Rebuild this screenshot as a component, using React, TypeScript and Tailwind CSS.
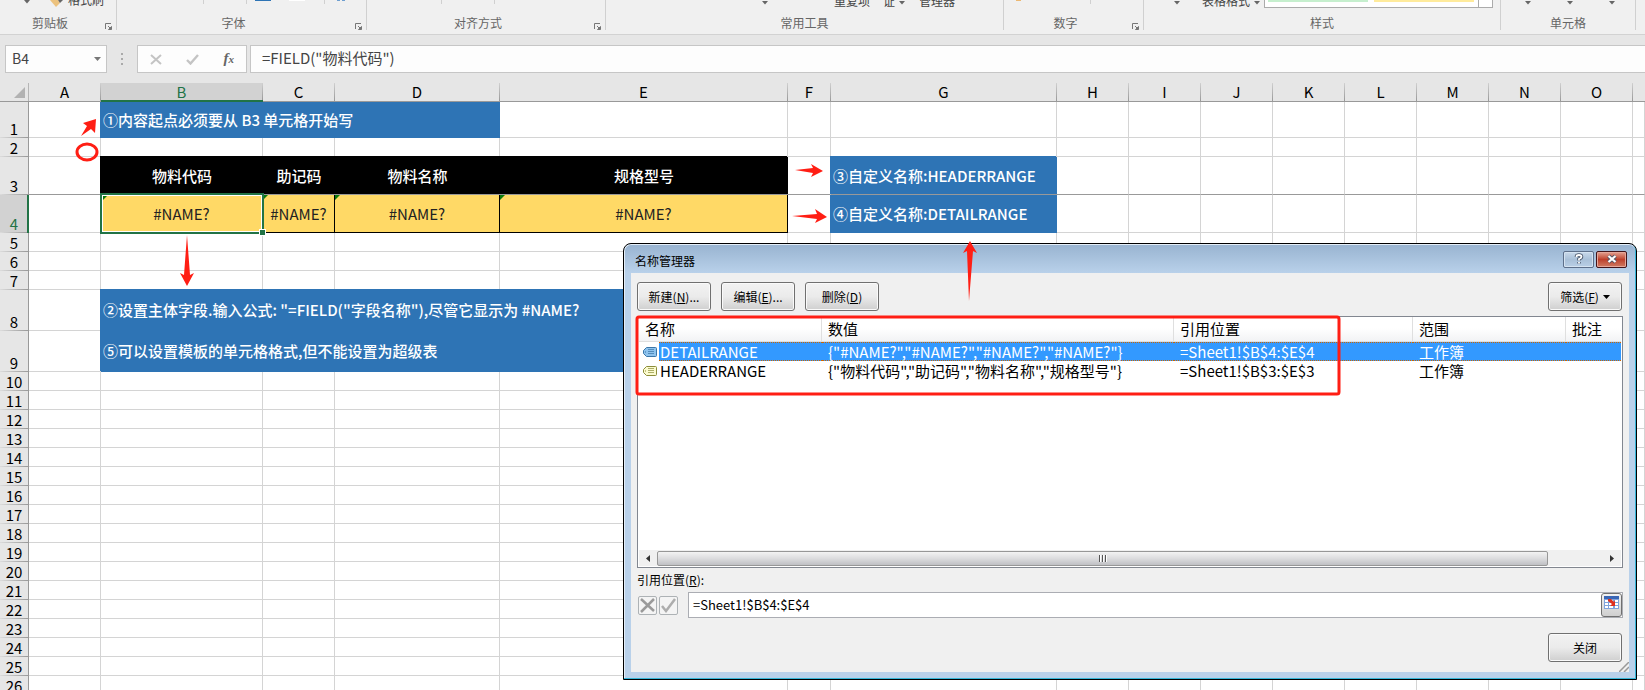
import React from "react";

const FONT = "font-['Noto_Sans_CJK_SC','Noto_Sans',sans-serif]";
const BOLD_FONT = "font-medium";

function Caret({ className = "" }: { className?: string }) {
  return (
    <svg className={`shrink-0 ${className}`} width="6" height="4" viewBox="0 0 6 4" aria-hidden="true">
      <path d="M0 0h6L3 3.5z" fill="#666" />
    </svg>
  );
}

function Launcher({ label }: { label: string }) {
  return (
    <button type="button" aria-label={label} className="h-[7px] w-[7px] shrink-0">
      <svg width="7" height="7" viewBox="0 0 7 7" fill="none" stroke="#777">
        <path d="M.5 6V.5H6" />
        <path d="M3 3l3 3" />
        <path d="M6.500 3.500v3h-3z" fill="#777" />
      </svg>
    </button>
  );
}

function Group({
  label,
  launcher,
  className,
  children,
}: {
  label: string;
  launcher?: boolean;
  className: string;
  children?: React.ReactNode;
}) {
  return (
    <section className={`flex shrink-0 flex-col ${className}`}>
      <div className="flex h-[30px] flex-col border-r border-[#d0d0d0]">
        <div className="flex h-2 items-start">{children}</div>
        <div className="flex h-[22px] items-end">
          <h2 className="flex-1 text-center text-[12px] leading-[14px] text-[#666]">{label}</h2>
          {launcher && (
            <span className="flex w-4 justify-end pr-1">
              <Launcher label={label} />
            </span>
          )}
        </div>
      </div>
    </section>
  );
}

function Tick({ className = "" }: { className?: string }) {
  return <span className={`h-1 w-px shrink-0 bg-[#d0d0d0] ${className}`} />;
}

function CutText({ children, className = "" }: { children: string; className?: string }) {
  return (
    <span className={`flex h-2 shrink-0 items-end whitespace-nowrap text-[12px] leading-[14px] text-[#444] ${className}`}>
      {children}
    </span>
  );
}

function Ribbon() {
  return (
    <header className="flex h-[35px] shrink-0 overflow-hidden border-b border-[#d2d2d2] bg-[#f0f0f0]">
      <Group label="剪贴板" launcher className="w-[117px]">
        <Caret className="ml-6" />
        <svg className="ml-5 shrink-0" width="14" height="7" viewBox="0 0 14 7" aria-hidden="true">
          <path d="M0 0h8l2 3-4 4z" fill="#ecc27e" />
          <path d="M8 0h5l-3 3z" fill="#666" />
        </svg>
        <CutText className="ml-1 -mt-px">格式刷</CutText>
      </Group>
      <Group label="字体" launcher className="w-[250px]">
        <Tick className="ml-[86px]" />
        <Tick className="ml-[42px]" />
        <span className="ml-2 h-px w-4 bg-[#2e74b5]" />
        <span className="ml-[18px] h-px w-4 bg-white" />
        <Tick className="ml-[19px]" />
        <span className="ml-3 h-px w-[3px] bg-[#6f9fd0]" />
        <span className="ml-[2px] h-px w-[3px] bg-[#6f9fd0]" />
      </Group>
      <Group label="对齐方式" launcher className="w-[239px]">
        <Tick className="ml-[74px]" />
        <Tick className="ml-[52px]" />
      </Group>
      <Group label="常用工具" className="w-[398px]">
        <Caret className="ml-[156px] mt-px" />
        <CutText className="ml-[66px]">重复项</CutText>
        <CutText className="ml-[13px]">证</CutText>
        <Caret className="ml-1 mt-px" />
        <CutText className="ml-[14px]">管理器</CutText>
      </Group>
      <Group label="数字" launcher className="w-[140px]">
        <span className="ml-3 h-px w-[5px] bg-[#ecb872]" />
        <Tick className="ml-[69px]" />
      </Group>
      <Group label="样式" className="min-w-[357px] flex-1">
        <Caret className="ml-[30px] mt-px" />
        <CutText className="ml-[22px]">表格格式</CutText>
        <Caret className="ml-1 mt-px" />
        <div className="ml-1 flex h-2 flex-1 border-x border-b border-[#ababab] bg-white pl-[3px]">
          <span className="h-[2px] flex-1 bg-[#c6efce]" />
          <span className="ml-[6px] h-[2px] flex-1 bg-[#ffeb9c]" />
          <span className="ml-1 h-[7px] w-[14px] border-l border-[#ababab]" />
        </div>
        <span className="w-[7px]" />
      </Group>
      <Group label="单元格" className="w-[135px]">
        <Caret className="ml-6 mt-px" />
        <Caret className="ml-9 mt-px" />
        <Caret className="ml-9 mt-px" />
      </Group>
      <span className="w-[9px] shrink-0" />
    </header>
  );
}

function FormulaBar() {
  return (
    <div className="flex h-[48px] shrink-0 items-start pl-[5px] pt-[10px]">
      <div className="flex h-7 w-[102px] shrink-0 items-center border border-[#c6c6c6] bg-[#fdfdfd] pr-[5px]">
        <input
          aria-label="名称框"
          defaultValue="B4"
          className="h-full w-0 flex-1 bg-transparent pb-[2px] pl-[6px] text-[14px] text-[#444] outline-none"
        />
        <svg width="7" height="4" viewBox="0 0 7 4" aria-hidden="true">
          <path d="M0 0h7L3.500 4z" fill="#777" />
        </svg>
      </div>
      <span className="flex h-7 w-[30px] shrink-0 flex-col items-center justify-center gap-[3px]">
        <i className="size-[2px] bg-[#aaa]" />
        <i className="size-[2px] bg-[#aaa]" />
        <i className="size-[2px] bg-[#aaa]" />
      </span>
      <div className="flex h-7 w-[110px] shrink-0 items-center justify-around border border-[#c6c6c6] bg-[#fdfdfd]">
        <button type="button" aria-label="取消">
          <svg width="12" height="11" viewBox="0 0 12 11" stroke="#c4c4c4" strokeWidth="2">
            <path d="M1 1l10 9M11 1L1 10" />
          </svg>
        </button>
        <button type="button" aria-label="输入">
          <svg width="13" height="11" viewBox="0 0 13 11" fill="none" stroke="#c4c4c4" strokeWidth="2.400">
            <path d="M1 6l3.500 3.500L12 1" />
          </svg>
        </button>
        <button type="button" aria-label="插入函数" className="pb-[2px] font-['Liberation_Serif',serif] text-[15px] font-bold italic leading-5 text-[#666]">
          f<span className="text-[11px]">x</span>
        </button>
      </div>
      <input
        aria-label="编辑栏"
        defaultValue={'=FIELD("物料代码")'}
        className="ml-[3px] h-7 w-0 flex-1 border border-r-0 border-[#c6c6c6] bg-[#fdfdfd] pb-1 pl-[11px] text-[15px] text-[#444] outline-none"
      />
    </div>
  );
}

const COLS: [string, string][] = [
  ["A", "w-[72px]"],
  ["B", "w-[162px]"],
  ["C", "w-[72px]"],
  ["D", "w-[165px]"],
  ["E", "w-[288px]"],
  ["F", "w-[43px]"],
  ["G", "w-[226px]"],
  ["H", "w-[72px]"],
  ["I", "w-[72px]"],
  ["J", "w-[72px]"],
  ["K", "w-[72px]"],
  ["L", "w-[72px]"],
  ["M", "w-[72px]"],
  ["N", "w-[72px]"],
  ["O", "w-[72px]"],
  ["", ""],
];

const BLUE = `relative overflow-visible whitespace-nowrap bg-[#2e74b5] pl-[2px] text-left text-[15px] text-white ${BOLD_FONT}`;

function Blank({ n, line = "border-b-[#d4d4d4]" }: { n: number; line?: string }) {
  return (
    <>
      {Array.from({ length: n }, (_, i) => (
        <td key={i} className={`border-b border-r border-r-[#d4d4d4] p-0 ${line}`} />
      ))}
    </>
  );
}

function RowHead({ n, active }: { n: number; active?: boolean }) {
  return (
    <th
      scope="row"
      className={`relative border-r p-0 text-center align-bottom text-[15px] font-normal leading-[18px] ${
        active ? "border-r-[#217346] bg-[#d2d2d2] text-[#217346]" : "border-r-[#999] bg-[#e6e6e6] text-black"
      }`}
    >
      <span className="block h-[17px] leading-[18px]">{n}</span>
      <span className="block h-px bg-linear-to-r from-[#dcdcdc] to-[#999]" />
      {active && <span className="absolute inset-y-0 right-0 w-px bg-[#217346]" />}
    </th>
  );
}

function Flag() {
  return (
    <svg className="absolute left-0 top-0" width="5" height="5" viewBox="0 0 5 5" aria-hidden="true">
      <path d="M0 0h5L0 5z" fill="#0b7a0b" />
    </svg>
  );
}

function Sheet() {
  const fields = ["物料代码", "助记码", "物料名称", "规格型号"];
  return (
    <table className="w-full min-w-[1645px] table-fixed border-separate border-spacing-0 bg-white">
      <colgroup>
        <col className="w-[29px]" />
        {COLS.map(([name, w]) => (
          <col key={name} className={w} />
        ))}
      </colgroup>
      <thead>
        <tr className="h-[19px]">
          <th className="border-b border-[#999] bg-[#e6e6e6] p-0">
            <div className="flex h-[18px] items-center justify-end border-r border-[#b5b5b5] pr-[3px]">
              <svg width="11" height="11" viewBox="0 0 11 11" aria-hidden="true">
                <path d="M11 0v11H0z" fill="#b2b2b2" />
              </svg>
            </div>
          </th>
          {COLS.map(([name]) => (
            <th
              key={name}
              scope="col"
              className={`border-b p-0 text-[15px] font-normal ${
                name === "B" ? "border-b-[#217346] bg-[#d2d2d2] text-[#217346]" : "border-b-[#999] bg-[#e6e6e6] text-black"
              }`}
            >
              <div className={`flex h-[18px] ${name === "B" ? "border-b border-[#217346]" : ""}`}>
                <span className="flex-1 leading-[18px]">{name}</span>
                {name && <span className="w-px bg-linear-to-b from-[#d0d0d0] to-[#999]" />}
              </div>
            </th>
          ))}
        </tr>
      </thead>
      <tbody>
        <tr className="h-9">
          <RowHead n={1} />
          <td className="border-b border-r border-[#d4d4d4]" />
          <td colSpan={3} className={`${BLUE} shadow-[-1px_0_0_#2e74b5]`}>
            ①内容起点必须要从 B3 单元格开始写
          </td>
          <Blank n={12} />
        </tr>
        <tr className="h-[19px]">
          <RowHead n={2} />
          <Blank n={16} />
        </tr>
        <tr className="h-[38px]">
          <RowHead n={3} />
          <Blank n={1} line="border-b-[#999]" />
          {fields.map((f) => (
            <td
              key={f}
              className={`relative border-b border-[#999] bg-black p-0 pt-[2px] text-center text-[15px] text-white shadow-[-1px_-1px_0_#000] ${BOLD_FONT}`}
            >
              {f}
            </td>
          ))}
          <Blank n={1} line="border-b-[#999]" />
          <td className={`${BLUE} border-b border-[#999] pb-0 pt-[2px] shadow-[-1px_-1px_0_#2e74b5]`}>
            ③自定义名称:HEADERRANGE
          </td>
          <Blank n={9} line="border-b-[#999]" />
        </tr>
        <tr className="h-[38px]">
          <RowHead n={4} active />
          <Blank n={1} />
          {fields.map((f, i) => (
            <td
              key={f}
              className={`relative border-b border-r border-black bg-[#ffd966] p-0 pt-px text-center text-[15px] text-[#222] ${
                i === 0 ? "z-10" : ""
              }`}
            >
              {i === 0 && (
                <span className="pointer-events-none absolute -bottom-[2px] -left-px -right-[2px] -top-[2px] border-2 border-[#217346]">
                  <span className="absolute inset-0 border border-white" />
                  <span className="absolute -bottom-1 -right-1 size-[7px] border border-white bg-[#217346]" />
                </span>
              )}
              {i === 0 ? (
                <span className="absolute left-[2px] top-px">
                  <svg width="4" height="4" viewBox="0 0 4 4" aria-hidden="true">
                    <path d="M0 0h4L0 4z" fill="#0b7a0b" />
                  </svg>
                </span>
              ) : (
                <Flag />
              )}
              #NAME?
            </td>
          ))}
          <Blank n={1} />
          <td className={`${BLUE} shadow-[-1px_0_0_#2e74b5]`}>④自定义名称:DETAILRANGE</td>
          <Blank n={9} />
        </tr>
        {[5, 6, 7].map((n) => (
          <tr key={n} className="h-[19px]">
            <RowHead n={n} />
            <Blank n={16} />
          </tr>
        ))}
        <tr className="h-[41px]">
          <RowHead n={8} />
          <Blank n={1} />
          <td colSpan={4} className={`${BLUE} shadow-[-1px_-1px_0_#2e74b5]`}>
            {'②设置主体字段.输入公式: "=FIELD("字段名称"),尽管它显示为 #NAME?'}
          </td>
          <Blank n={11} />
        </tr>
        <tr className="h-[41px]">
          <RowHead n={9} />
          <Blank n={1} />
          <td colSpan={4} className={`${BLUE} shadow-[-1px_-1px_0_#2e74b5]`}>
            ⑤可以设置模板的单元格格式,但不能设置为超级表
          </td>
          <Blank n={11} />
        </tr>
        {Array.from({ length: 17 }, (_, i) => i + 10).map((n) => (
          <tr key={n} className="h-[19px]">
            <RowHead n={n} />
            <Blank n={16} />
          </tr>
        ))}
      </tbody>
    </table>
  );
}

const BTN =
  "flex items-center justify-center rounded-[3px] border border-[#707070] bg-linear-to-b from-[#f2f2f2] from-0% via-[#ebebeb] via-50% to-[#cfcfcf] text-[12px] text-black shadow-[inset_0_0_0_1px_#fafafa]";

function TagIcon({ selected }: { selected?: boolean }) {
  const fill = selected ? "#8ec3ee" : "#fbfbcf";
  const line = selected ? "#3b76a8" : "#8d8d3a";
  return (
    <svg width="14" height="10" viewBox="0 0 14 10" fill="none" stroke={line} aria-hidden="true">
      <path d="M3.500.5h9a1 1 0 011 1v7a1 1 0 01-1 1h-9L.5 6.500v-3z" fill={fill} />
      <path d="M5 2.500h6M5 4.500h6M5 6.500h6" strokeWidth=".7" />
      <path d="M2 5h1" />
    </svg>
  );
}

const NAMES = [
  { name: "DETAILRANGE", value: '{"#NAME?","#NAME?","#NAME?","#NAME?"}', ref: "=Sheet1!$B$4:$E$4" },
  { name: "HEADERRANGE", value: '{"物料代码","助记码","物料名称","规格型号"}', ref: "=Sheet1!$B$3:$E$3" },
];

function NameManager() {
  return (
    <section
      role="dialog"
      aria-label="名称管理器"
      className="absolute left-[623px] right-2 top-[243px] z-20 flex flex-col rounded-t-lg border border-black bg-[#b9d1ea] pb-[7px] shadow-[inset_-1px_-1px_0_#35b6d8,inset_1px_1px_0_#e4eef8]"
    >
      <div className="mx-px mt-px flex h-7 items-center rounded-t-md bg-linear-to-b from-[#99b4d1] to-[#b9d1ea] pl-[10px] pr-2">
        <h1 className="flex-1 pt-1 text-[12px] leading-5 text-black">名称管理器</h1>
        <button
          type="button"
          aria-label="帮助"
          className="mr-[2px] flex h-[17px] w-[31px] items-center justify-center rounded-[2px] border border-[#5d6f8a] bg-linear-to-b from-[#c9d9ea] via-[#a9c0d8] via-50% to-[#b9cfe6] shadow-[inset_0_0_0_1px_#d5e3f1]"
        >
          <svg width="10" height="12" viewBox="0 0 10 12" fill="none" aria-hidden="true">
            <path d="M2.500 4V3.500Q2.500 2 5 2t2.500 1.800Q7.500 5 5 6v1.500M5 9v1.500" stroke="#4a566b" strokeWidth="3.500" />
            <path d="M2.500 4V3.500Q2.500 2 5 2t2.500 1.800Q7.500 5 5 6v1.500M5 9v1.500" stroke="#fff" strokeWidth="1.800" />
          </svg>
        </button>
        <button
          type="button"
          aria-label="关闭窗口"
          className="flex h-[17px] w-[31px] items-center justify-center rounded-[2px] border border-[#431419] bg-linear-to-b from-[#e3a292] via-[#bd3f2b] via-50% to-[#cf7a62] shadow-[inset_0_0_0_1px_#e5a79a]"
        >
          <svg width="12" height="10" viewBox="0 0 12 10" aria-hidden="true">
            <path d="M2.500 2l7 6M9.500 2l-7 6" stroke="#535666" strokeWidth="4" />
            <path d="M2.500 2l7 6M9.500 2l-7 6" stroke="#fff" strokeWidth="2.200" />
          </svg>
        </button>
      </div>
      <div className="relative mx-[7px] flex flex-col bg-[#f0f0f0] px-[6px] pb-[10px] pt-[9px]">
        <div className="flex gap-[10px] pr-px">
          <button type="button" className={`${BTN} h-[29px] w-[74px]`}>
            新建(<u>N</u>)...
          </button>
          <button type="button" className={`${BTN} h-[29px] w-[74px]`}>
            编辑(<u>E</u>)...
          </button>
          <button type="button" className={`${BTN} h-[29px] w-[74px]`}>
            删除(<u>D</u>)
          </button>
          <button type="button" className={`${BTN} ml-auto h-[29px] w-[74px]`}>
            筛选(<u>F</u>)
            <svg className="ml-1" width="7" height="4" viewBox="0 0 7 4" aria-hidden="true">
              <path d="M0 0h7L3.500 4z" />
            </svg>
          </button>
        </div>
        <div className="mt-[5px] flex h-[252px] flex-col border border-[#828790] bg-white px-px pb-px">
          <table className="w-full table-fixed border-separate border-spacing-0 text-left text-[15px] text-black">
            <colgroup>
              <col className="w-[20px]" />
              <col className="w-[163px]" />
              <col className="w-[352px]" />
              <col className="w-[239px]" />
              <col className="w-[153px]" />
              <col />
            </colgroup>
            <thead>
              <tr className="h-[25px] bg-linear-to-b from-white via-white via-45% to-[#f1f2f4]">
                <th colSpan={2} className="border-b border-r border-[#dfdfdf] p-0 pl-[6px] font-normal">
                  名称
                </th>
                {["数值", "引用位置", "范围"].map((h) => (
                  <th key={h} className="border-b border-r border-[#dfdfdf] p-0 pl-[6px] font-normal">
                    {h}
                  </th>
                ))}
                <th className="border-b border-[#dfdfdf] p-0 pl-[6px] font-normal">批注</th>
              </tr>
            </thead>
            <tbody>
              {NAMES.map((r, i) => {
                const cell =
                  i === 0
                    ? "border-y border-dotted border-[#cc6600] bg-[#3399ff] text-white"
                    : "border-y border-transparent";
                return (
                  <tr key={r.name} className="h-[19px] whitespace-nowrap leading-4">
                    <td className="p-0 pl-1">
                      <TagIcon selected={i === 0} />
                    </td>
                    <td className={`p-0 pl-px ${cell}`}>{r.name}</td>
                    <td className={`p-0 pl-[6px] ${cell}`}>{r.value}</td>
                    <td className={`p-0 pl-[6px] ${cell}`}>{r.ref}</td>
                    <td className={`p-0 pl-[6px] ${cell}`}>工作簿</td>
                    <td className={`p-0 ${cell}`} />
                  </tr>
                );
              })}
            </tbody>
          </table>
          <div className="mt-auto flex h-4 items-center bg-[#f0f0f0]">
            <span className="flex w-[18px] justify-center">
              <svg width="4" height="7" viewBox="0 0 4 7" aria-hidden="true">
                <path d="M4 0v7L0 3.500z" fill="#333" />
              </svg>
            </span>
            <span className="flex h-[15px] flex-1 items-center justify-center gap-px rounded-[2px] border border-[#979797] bg-linear-to-b from-[#f3f3f3] via-[#dcdcde] via-50% to-[#bfc0c4]">
              <i className="h-[7px] w-[2px] border-l border-[#555] bg-white" />
              <i className="h-[7px] w-[2px] border-l border-[#555] bg-white" />
              <i className="h-[7px] w-[2px] border-l border-[#555] bg-white" />
            </span>
            <span className="flex w-[73px] justify-end pr-[7px]">
              <svg width="4" height="7" viewBox="0 0 4 7" aria-hidden="true">
                <path d="M0 0v7l4-3.500z" fill="#333" />
              </svg>
            </span>
          </div>
        </div>
        <label htmlFor="refers-to" className="mt-[3px] text-[12px] leading-[18px] text-black">
          引用位置(<u>R</u>):
        </label>
        <div className="mt-[3px] flex h-[26px] items-center">
          <button type="button" aria-label="取消更改" className="ml-px flex h-[19px] w-[19px] items-center justify-center rounded-[2px] border border-[#adb2b5] bg-[#f4f4f4]">
            <svg width="15" height="15" viewBox="0 0 15 15" stroke="#9a9a9a" strokeWidth="2.500">
              <path d="M1 1l13 12M14 1L1 14" />
            </svg>
          </button>
          <button type="button" aria-label="接受更改" className="ml-[2px] flex h-[19px] w-[19px] items-center justify-center rounded-[2px] border border-[#adb2b5] bg-[#f4f4f4]">
            <svg width="15" height="15" viewBox="0 0 15 15" fill="none" stroke="#adadad" strokeWidth="2.500">
              <path d="M1 8l4 5 9-12" />
            </svg>
          </button>
          <div className="ml-[10px] flex h-[26px] flex-1 items-center border border-[#abadb3] bg-white">
            <input
              id="refers-to"
              defaultValue="=Sheet1!$B$4:$E$4"
              className="h-full w-0 flex-1 bg-transparent pb-[2px] pl-1 text-[13px] text-black outline-none"
            />
            <button type="button" aria-label="选择区域" className="flex h-6 w-[21px] items-start justify-center rounded-[3px] border border-[#707070] bg-linear-to-b from-[#f2f2f2] to-[#cfcfcf] pt-[2px]">
              <svg width="15" height="14" viewBox="0 0 15 14" aria-hidden="true">
                <path d="M0 0h15v13H0z" fill="#7fa3dc" />
                <path d="M0 0h15v3H0z" fill="#3a66b5" />
                <path d="M1 4h3v2H1zM5 4h4v2H5zM11 4h3v2h-3zM1 7h3v2H1zM5 7h4v2H5zM11 7h3v2h-3zM1 10h3v2H1zM5 10h4v2H5zM11 10h3v2h-3z" fill="#fff" />
                <path d="M4 3h3l3 3 1-2v6H6l2-2-4-3z" fill="#e0301e" />
              </svg>
            </button>
          </div>
        </div>
        <button type="button" className={`${BTN} mr-px mt-[15px] h-[29px] w-[74px] self-end`}>
          关闭
        </button>
        <svg className="absolute bottom-0 right-0" width="10" height="10" viewBox="0 0 10 10" stroke="#999" aria-hidden="true">
          <path d="M0 10L10 0M5 10l5-5" strokeWidth="1.500" />
        </svg>
      </div>
    </section>
  );
}

function Annotations() {
  return (
    <svg className="pointer-events-none absolute left-0 top-0 z-30" width="1645" height="690" viewBox="0 0 1645 690" fill="#ff1e14" aria-hidden="true">
      <path d="M96 119l-13 4 4 3-6 10 10-7 4 4z" />
      <ellipse cx="87" cy="152" rx="10" ry="8" fill="none" stroke="#ff1e14" strokeWidth="3" />
      <path d="M187 235l3 40 4-2-7 13-7-13 4 2z" />
      <path d="M795 170l18-2-2-4 12 7-12 6 2-4z" />
      <path d="M792 216l25-2-2-5 12 8-12 6 2-4z" />
      <path d="M970 241l-7 12 4-2 2 50 4-50 4 2z" />
      <rect x="637" y="317" width="702" height="77" rx="2" fill="none" stroke="#ff1e14" strokeWidth="3" />
    </svg>
  );
}

export default function App() {
  return (
    <main className={`relative flex h-screen flex-col overflow-hidden bg-[#e6e6e6] ${FONT}`}>
      <Ribbon />
      <FormulaBar />
      <Sheet />
      <NameManager />
      <Annotations />
    </main>
  );
}
